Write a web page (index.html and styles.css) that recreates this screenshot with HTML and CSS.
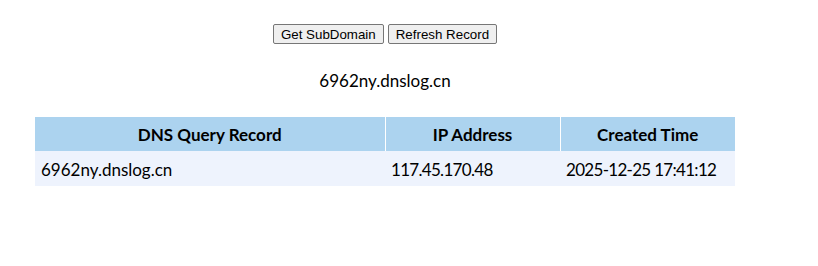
FILE: index.html
```html
<!DOCTYPE html>
<html>
<head>
<meta charset="utf-8">
<link rel="stylesheet" href="styles.css">
</head>
<body>
<div class="page">
  <div class="actions">
    <button class="btn">Get SubDomain</button>
    <button class="btn">Refresh Record</button>
  </div>
  <div class="domain">6962ny.dnslog.cn</div>
  <table class="records">
    <thead>
      <tr><th class="c1">DNS Query Record</th><th class="c2">IP Address</th><th class="c3">Created Time</th></tr>
    </thead>
    <tbody>
      <tr><td>6962ny.dnslog.cn</td><td class="num">117.45.170.48</td><td class="num">2025-12-25 17:41:12</td></tr>
    </tbody>
  </table>
</div>
</body>
</html>
```
FILE: styles.css
```css
html, body { margin: 0; padding: 0; background: #fff; }
body { font-family: Lato, "Noto Sans", sans-serif; color: #000; }
.page { width: 770px; padding: 24px 0 0 0; }
.actions { display: flex; justify-content: center; gap: 4px; }
.btn {
  font-family: "Liberation Sans", Arial, sans-serif;
  font-size: 13.33px;
  height: 20px;
  padding: 1px 7px;
  background: #efefef;
  border: 1px solid #767676;
  border-radius: 2px;
  color: #000;
}
.domain { text-align: center; font-size: 17px; margin-top: 26px; line-height: 22px; }
.records {
  margin: 25px auto 0 auto;
  width: 700px;
  table-layout: fixed;
  border-collapse: collapse;
  font-size: 17px;
}
.records th, .records td { box-sizing: border-box; }
.records th {
  background: #acd3ef;
  font-weight: bold;
  height: 34px;
  padding: 0 6px;
  text-align: center;
  border-left: 1px solid #fff;
}
.records th:first-child { border-left: none; }
.records .c1 { width: 50%; }
.records .c2 { width: 25%; }
.records .c3 { width: 25%; }
.records td {
  background: #eef3fd;
  height: 35px;
  padding: 1px 6px 0 6px;
  text-align: left;
  white-space: nowrap;
}
.records td.num { letter-spacing: -0.7px; }
```
